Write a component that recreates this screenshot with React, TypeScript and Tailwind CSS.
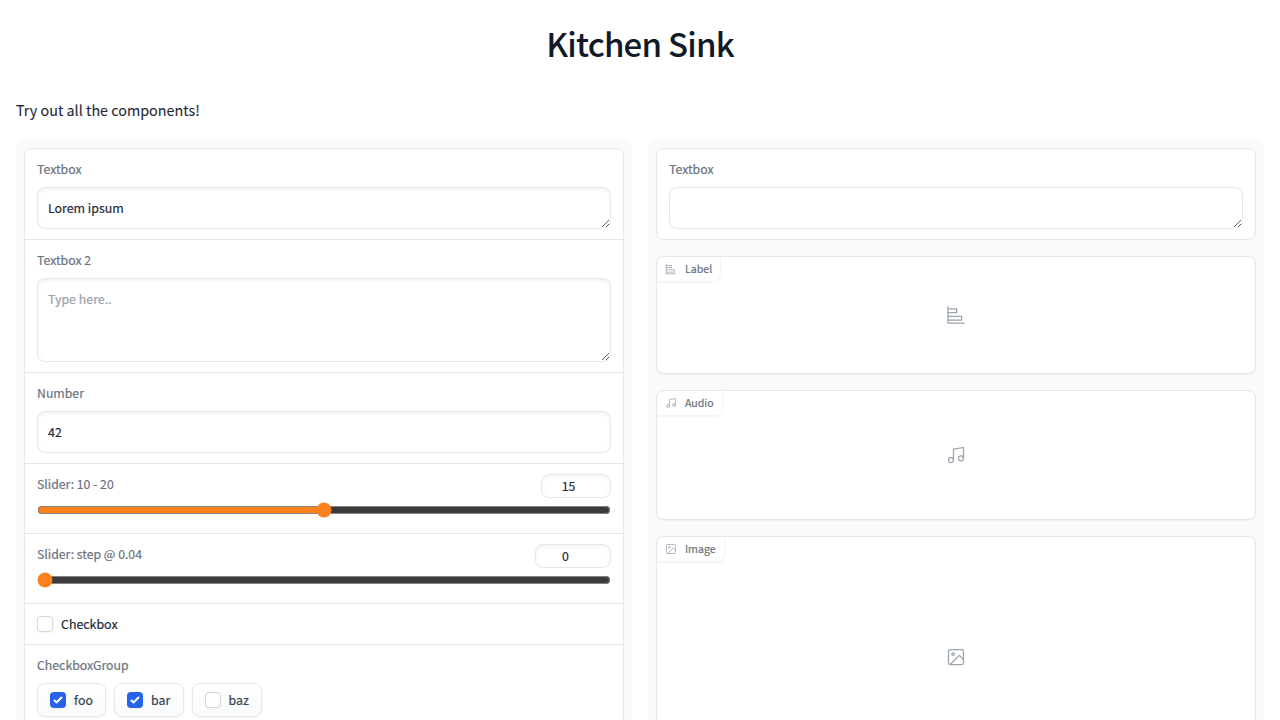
import type { ReactNode } from "react";
import { Music } from "lucide-react";

const label = "block h-5 text-[12.3px] leading-5 text-[#6b7280] mb-2";
const field =
  "block w-full rounded-lg border border-[#e5e7eb] bg-white px-2.5 py-[9px] text-[12.4px] leading-[22px] text-[#1f2937] outline-none placeholder:text-[#9ca3af] shadow-[inset_0_2px_4px_0_rgba(0,0,0,0.05)]";

function ChartIcon({ className }: { className: string }) {
  return (
    <svg viewBox="0 0 32 32" fill="currentColor" className={className}>
      <path d="M4 2H2v26a2 2 0 0 0 2 2h26v-2H4v-3h22v-8H4v-4h14V5H4Zm20 17v4H4v-4ZM16 7v4H4V7Z" />
    </svg>
  );
}

function MusicIcon({ className }: { className: string }) {
  return <Music strokeWidth={1.5} className={className} />;
}

function PictureIcon({ className }: { className: string }) {
  return (
    <svg viewBox="0 0 24 24" fill="none" stroke="currentColor" strokeWidth="1.5" strokeLinecap="round" strokeLinejoin="round" className={className}>
      <rect x="3" y="3" width="18" height="18" rx="2" ry="2" />
      <circle cx="8.5" cy="8.5" r="1.5" />
      <polyline points="21 15 16 10 5 21" />
    </svg>
  );
}

function Row({ className, children }: { className: string; children: ReactNode }) {
  return <div className={`border-b border-[#e5e7eb] px-3 pt-2.5 ${className}`}>{children}</div>;
}

function Slider({ title, value, min, max, step, width }: { title: string; value: number; min: number; max: number; step: number; width: string }) {
  return (
    <Row className="h-[70px]">
      <div className="flex h-6 items-start justify-between">
        <span className="text-[12.25px] leading-5 text-[#6b7280]">{title}</span>
        <input
          type="text"
          readOnly
          value={value}
          className={`h-6 rounded-lg border border-[#e5e7eb] bg-white pr-[23px] pl-2 text-center text-[12.3px] leading-5 text-[#1f2937] shadow-[inset_0_2px_4px_0_rgba(0,0,0,0.05)] ${width}`}
        />
      </div>
      <input type="range" min={min} max={max} step={step} defaultValue={value} className="mt-1 block h-4 w-full accent-[#fa811b]" />
    </Row>
  );
}

function Check({ checked }: { checked?: boolean }) {
  return checked ? (
    <span className="block size-4 rounded bg-[#2563eb] shadow-xs">
      <svg viewBox="0 0 16 16" fill="white" className="size-4">
        <path d="M12.207 4.793a1 1 0 0 1 0 1.414l-5 5a1 1 0 0 1-1.414 0l-2-2a1 1 0 0 1 1.414-1.414L6.5 9.086l4.293-4.293a1 1 0 0 1 1.414 0z" />
      </svg>
    </span>
  ) : (
    <span className="block size-4 rounded border border-[#d1d5db] bg-white shadow-xs" />
  );
}

function Option({ name, checked, width }: { name: string; checked?: boolean; width: string }) {
  return (
    <div className={`flex h-[34px] items-center gap-2 rounded-lg border border-[#e5e7eb] bg-gradient-to-t from-[#f9fafb] to-white pl-3 text-[12.4px] leading-5 text-[#374151] shadow-xs ${width}`}>
      <Check checked={checked} />
      <span>{name}</span>
    </div>
  );
}

function Panel({ title, height, Icon }: { title: string; height: string; Icon: (p: { className: string }) => ReactNode }) {
  return (
    <div className={`relative flex items-center justify-center overflow-hidden rounded-lg border border-[#e5e7eb] bg-white text-[#9ca3af] shadow-xs ${height}`}>
      <div className="absolute top-0 left-0 flex h-[25px] items-center rounded-br-lg border-r border-b border-[#f3f4f6] px-2 text-[10.6px] leading-4 text-[#6b7280] shadow-xs">
        <Icon className="mr-2 size-3 text-[#9ca3af]" />
        {title}
      </div>
      <Icon className="size-5" />
    </div>
  );
}

export default function App() {
  return (
    <main className="h-[720px] overflow-hidden bg-white px-4 font-['Noto_Sans_CJK_SC','Noto_Sans',sans-serif] font-normal [-webkit-text-stroke:0.2px_currentColor]">
      <h1 className="pt-[23px] text-center text-[33px] leading-10 tracking-[-0.8px] font-medium text-[#111827] [-webkit-text-stroke:0]">Kitchen Sink</h1>
      <p className="mt-[35px] mb-[18px] text-[14.35px] leading-6 text-[#1f2937] [-webkit-text-stroke:0.1px_currentColor]">Try out all the components!</p>
      <div className="grid grid-cols-2 items-start gap-4">
        <section className="rounded-lg bg-[#f9fafb] p-2">
          <div className="rounded-lg border border-[#e5e7eb] bg-white">
            <Row className="h-[91px]">
              <label className={label}>Textbox</label>
              <textarea defaultValue="Lorem ipsum" className={`h-[42px] ${field}`} />
            </Row>
            <Row className="h-[133px]">
              <label className={label}>Textbox 2</label>
              <textarea placeholder="Type here.." className={`h-[84px] ${field}`} />
            </Row>
            <Row className="h-[91px]">
              <label className={label}>Number</label>
              <input type="text" defaultValue="42" className={`h-[42px] ${field}`} />
            </Row>
            <Slider title="Slider: 10 - 20" value={15} min={10} max={20} step={1} width="w-[70px]" />
            <Slider title="Slider: step @ 0.04" value={0} min={0} max={20} step={0.04} width="w-[76px]" />
            <Row className="h-[41px]">
              <div className="flex h-5 items-center gap-2 text-[12.4px] leading-5 text-[#1f2937]">
                <Check />
                <span>Checkbox</span>
              </div>
            </Row>
            <div className="px-3 pt-2.5 pb-3">
              <div className={label}>CheckboxGroup</div>
              <div className="flex gap-2">
                <Option name="foo" checked width="w-[69px]" />
                <Option name="bar" checked width="w-[69.6px]" />
                <Option name="baz" width="w-[70.5px]" />
              </div>
            </div>
          </div>
        </section>
        <section className="flex flex-col gap-4 rounded-lg bg-[#f9fafb] p-2">
          <div className="h-[92px] rounded-lg border border-[#e5e7eb] bg-white px-3 pt-2.5">
            <label className={label}>Textbox</label>
            <textarea readOnly className={`h-[42px] ${field} shadow-none`} />
          </div>
          <Panel title="Label" height="h-[118px]" Icon={ChartIcon} />
          <Panel title="Audio" height="h-[130px]" Icon={MusicIcon} />
          <Panel title="Image" height="h-[242px]" Icon={PictureIcon} />
        </section>
      </div>
    </main>
  );
}
